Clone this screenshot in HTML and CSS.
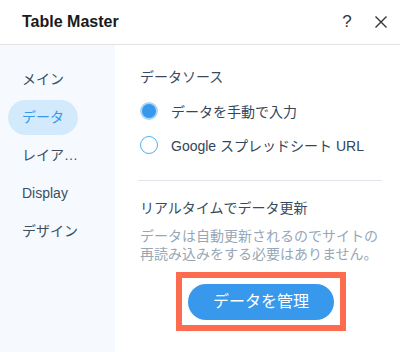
FILE: index.html
```html
<!DOCTYPE html>
<html lang="ja">

<head>
    <meta charset="UTF-8">
    <meta name="viewport" content="width=device-width, initial-scale=1.0">
    <title>Table Master</title>
    <link rel="stylesheet" href="styles.css">
</head>

<body>
    <div class="panel">
        <div class="header">
            <span class="title">Table Master</span>
            <span class="help">?</span>
            <span class="close">
                <svg width="14" height="14" viewBox="0 0 14 14">
                    <path d="M1.5 1.5 L12.5 12.5 M12.5 1.5 L1.5 12.5" stroke="#333" stroke-width="1.4" fill="none" />
                </svg>
            </span>
        </div>
        <div class="body">
            <div class="side">
                <div class="side-item">メイン</div>
                <div class="side-item active">データ</div>
                <div class="side-item">レイア…</div>
                <div class="side-item">Display</div>
                <div class="side-item">デザイン</div>
            </div>
            <div class="content">
                <div class="label">データソース</div>
                <div class="radios">
                    <div class="radio-row">
                        <span class="radio checked"></span>
                        <span>データを手動で入力</span>
                    </div>
                    <div class="radio-row">
                        <span class="radio"></span>
                        <span>Google スプレッドシート URL</span>
                    </div>
                </div>
                <div class="divider"></div>
                <div class="label">リアルタイムでデータ更新</div>
                <p class="desc">データは自動更新されるのでサイトの再読み込みをする必要はありません。</p>
                <div class="btn-wrap">
                    <div class="frame">
                        <button class="btn">データを管理</button>
                    </div>
                </div>
            </div>
        </div>
    </div>
</body>

</html>
```

FILE: styles.css
```css
* {
    box-sizing: border-box;
    margin: 0;
}

body {
    font-family: 'Liberation Sans', 'Noto Sans CJK JP', sans-serif;
    background-color: #fff;
}

.panel {
    width: 400px;
    height: 352px;
    display: flex;
    flex-direction: column;
}

.header {
    height: 45px;
    border-bottom: 1px solid #e3e3e3;
    display: flex;
    align-items: center;
    padding: 0 12px 0 22px;
}

.title {
    font-size: 16px;
    font-weight: bold;
    color: #1a1a1a;
    flex: 1;
    line-height: 20px;
}

.help {
    font-size: 17px;
    color: #333;
    width: 16px;
    text-align: center;
    margin-right: 19px;
    line-height: 20px;
}

.close {
    width: 14px;
    height: 14px;
    display: flex;
}

.body {
    flex: 1;
    display: flex;
}

.side {
    width: 115px;
    background-color: #f6faff;
    padding: 17px 0 0 8px;
    display: flex;
    flex-direction: column;
    gap: 3px;
}

.side-item {
    width: 70px;
    height: 35px;
    line-height: 35px;
    padding-left: 14px;
    font-size: 14px;
    color: #3b4e5f;
    white-space: nowrap;
    border-radius: 18px;
}

.side-item.active {
    background-color: #d3eafc;
    color: #3899ec;
}

.content {
    flex: 1;
    padding: 22px 18px 0 25px;
}

.label {
    font-size: 14px;
    line-height: 20px;
    color: #3b4a5a;
}

.radios {
    margin-top: 12px;
    display: flex;
    flex-direction: column;
    gap: 10px;
}

.radio-row {
    height: 24px;
    display: flex;
    align-items: center;
    gap: 13px;
    font-size: 14px;
    color: #32465a;
}

.radio {
    width: 18px;
    height: 18px;
    border-radius: 50%;
    border: 1px solid #4eb1f2;
    background-color: #fff;
    flex-shrink: 0;
}

.radio.checked {
    background-color: #3899ec;
    border: 2px solid #a8d4f8;
    box-shadow: inset 0 0 0 1px #3899ec;
}

.divider {
    height: 1px;
    background-color: #dfe5eb;
    margin: 23px 0 17px -2px;
}

.desc {
    margin-top: 9px;
    font-size: 14px;
    line-height: 18px;
    color: #97a7b6;
}

.btn-wrap {
    margin-top: 9px;
    display: flex;
    justify-content: center;
}

.frame {
    border: 6px solid #fd6c4f;
    padding: 6px 6px 5px 6px;
}

.btn {
    display: block;
    width: 146px;
    height: 36px;
    border: none;
    border-radius: 18px;
    background-color: #3899ec;
    color: #fff;
    font-family: 'Liberation Sans', 'Noto Sans CJK JP', sans-serif;
    font-size: 16px;
    line-height: 36px;
    padding: 0;
}
```
